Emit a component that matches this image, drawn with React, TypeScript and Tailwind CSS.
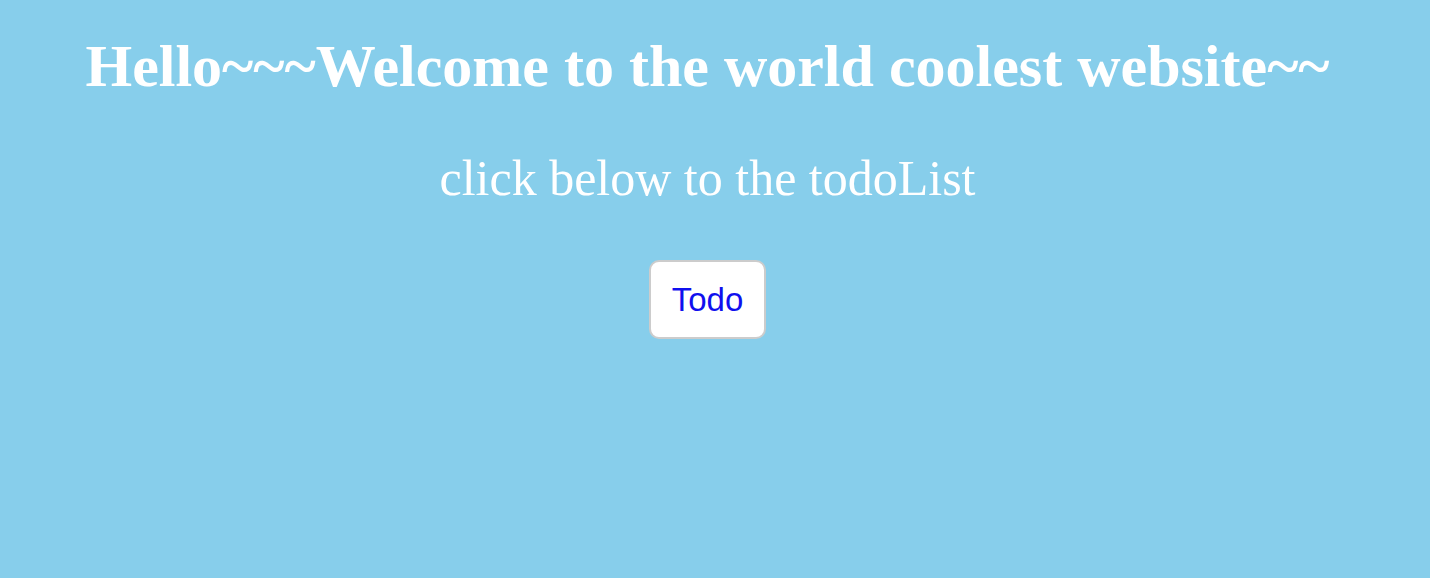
export default function App() {
  return (
    <div className="min-h-screen w-full bg-[#87ceeb] pr-[15px] text-center text-white" style={{ fontFamily: '"Liberation Serif", "Times New Roman", serif' }}>
      <h1 className="pt-[30px] text-[60px] font-bold leading-[72px]">
        Hello~~~Welcome to the world coolest website~~
      </h1>
      <p className="mt-[47px] text-[50px] leading-[58px]">click below to the todoList</p>
      <div className="mt-[53px] flex justify-center">
        <button className="h-[79px] w-[117px] rounded-[10px] border-2 border-[#cccccc] bg-white text-[33px] text-[#1010ee] font-['Liberation_Sans',Arial,sans-serif]">
          Todo
        </button>
      </div>
    </div>
  );
}
